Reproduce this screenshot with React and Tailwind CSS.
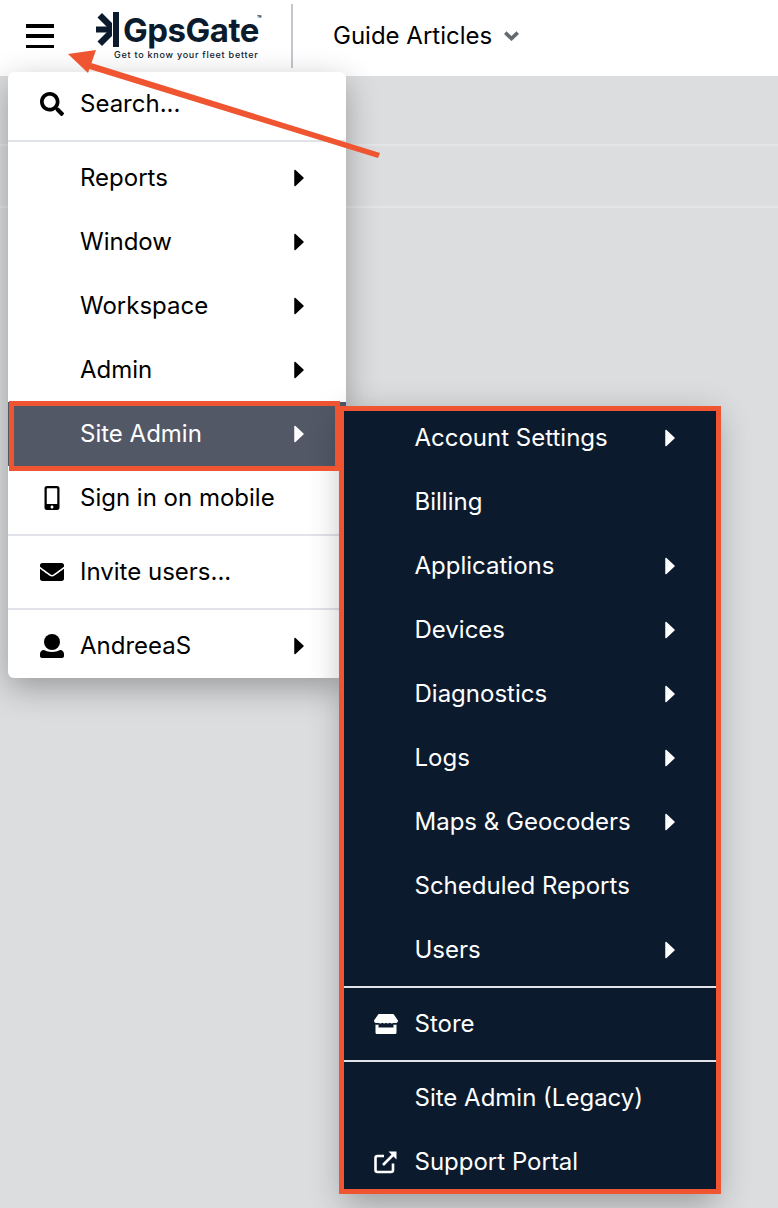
import { FaSearch, FaMobileAlt, FaEnvelope } from 'react-icons/fa';

const Caret = ({ className }) => (
  <svg width="10" height="18" viewBox="0 0 10 18" className={className} fill="currentColor" stroke="currentColor" strokeWidth="1.5" strokeLinejoin="round">
    <path d="M1 1.5 L9 9 L1 16.5 Z" />
  </svg>
);

const UserIcon = () => (
  <svg width="24" height="24" viewBox="0 0 24 24" fill="currentColor">
    <circle cx="12" cy="8" r="8" />
    <path d="M4 16 C6 17.2 9 18 12 18 C15 18 18 17.2 20 16 C22.5 16 24 18 24 20 V22 C24 23.2 23.2 24 22 24 H2 C0.8 24 0 23.2 0 22 V20 C0 18 1.5 16 4 16 Z" />
  </svg>
);

const StoreIcon = () => (
  <svg width="24" height="20" viewBox="0 0 24 20" fill="currentColor">
    <path d="M4.5 0 H19.5 L24 6.5 C24 9 21.5 9.6 20 8.7 C18.6 9.8 16.5 9.6 15.8 8.7 C14.5 9.8 13 9.8 12 8.7 C11 9.8 9.5 9.8 8.2 8.7 C7.5 9.6 5.4 9.8 4 8.7 C2.5 9.6 0 9 0 6.5 Z" />
    <path fillRule="evenodd" d="M1.5 10.5 C2.5 10.9 3.5 10.9 4.5 10.5 V13.5 H19.5 V10.5 C20.5 10.9 21.5 10.9 22.5 10.5 V18.5 C22.5 19.4 22 20 21 20 H3 C2 20 1.5 19.4 1.5 18.5 Z" />
  </svg>
);

const ExternalIcon = () => (
  <svg width="24" height="24" viewBox="0 0 24 24" fill="none" stroke="currentColor" strokeWidth="2.6">
    <path d="M19 13.5 V20 C19 21.2 18.2 22 17 22 H3.5 C2.3 22 1.5 21.2 1.5 20 V8 C1.5 6.8 2.3 6 3.5 6 H10" strokeLinejoin="round" />
    <path d="M9 15 L21 3" />
    <path d="M14.5 1.5 H22.5 V9.5 Z" fill="currentColor" stroke="none" />
  </svg>
);

const Row = ({ icon, label, caret, active }) => (
  <div className={`flex h-16 items-center pl-8 ${active ? 'bg-[#525866] text-white' : ''}`}>
    <div className="flex w-6 justify-center">{icon}</div>
    <span className="ml-4">{label}</span>
    {caret && <Caret className="ml-auto mr-[42px]" />}
  </div>
);

const SubRow = ({ icon, label, caret }) => (
  <div className="flex h-16 items-center pl-[30px]">
    <div className="flex w-6 justify-center">{icon}</div>
    <span className="ml-[16.5px]">{label}</span>
    {caret && <Caret className="ml-auto mr-[41px]" />}
  </div>
);

const Divider = ({ color }) => <div className={`my-1 h-0.5 ${color}`} />;

export default function App() {
  return (
    <div className="relative h-[1208px] w-[778px] overflow-hidden bg-[#dcdddf] font-['Inter',sans-serif] text-2xl text-black">
      {/* Header */}
      <div className="flex h-[76px] items-center bg-white pb-1">
        <div className="ml-[26px] flex w-7 flex-col gap-[6.75px]">
          <div className="h-[3.5px] bg-black" />
          <div className="h-[3.5px] bg-black" />
          <div className="h-[3.5px] bg-black" />
        </div>
        <div className="ml-[42px] w-[164px]">
          <div className="flex items-center">
            <svg width="23" height="35" viewBox="0 0 23 35" fill="#0b1b2d" className="shrink-0">
              <rect x="17" y="0" width="6" height="35" />
              <path d="M0 14.5 H16 V20.5 H0 Z" />
              <path d="M1.5 5.5 L6 1 L16 11 V17.5 H13.5 Z" />
              <path d="M1.5 29.5 L6 34 L16 24 V17.5 H13.5 Z" />
            </svg>
            <span className="ml-[4px] whitespace-nowrap text-[33px] leading-[32px] font-bold tracking-[-0.5px] text-[#0b1b2d]">
              GpsGate<span className="-ml-0.5 align-top text-[7px] leading-[10px] tracking-normal">™</span>
            </span>
          </div>
          <div className="ml-[18px] mt-[3px] whitespace-nowrap text-[9px] leading-[10px] font-medium tracking-[0.75px] text-[#0b1b2d]">
            Get to know your fleet better
          </div>
        </div>
        <div className="ml-[31px] h-16 w-0.5 bg-[#c3c6cc]" />
        <span className="ml-10">Guide Articles</span>
        <svg width="15" height="10" viewBox="0 0 15 10" className="ml-3 text-[#666a70]" fill="none" stroke="currentColor" strokeWidth="3.6">
          <path d="M1.3 1.6 L7.5 7.6 L13.7 1.6" />
        </svg>
      </div>

      {/* Page behind the menu */}
      <div className="h-[70px] border-b-2 border-[#e4e5e7]" />
      <div className="h-[62px] border-b-2 border-[#e4e5e7]" />

      {/* Main menu */}
      <div className="absolute left-2 top-[72px] w-[338px] overflow-hidden rounded-md bg-white shadow-[0_10px_32px_rgba(0,0,0,0.3)]">
        <Row icon={<FaSearch size={24} />} label="Search..." />
        <Divider color="bg-[#e0e4e8]" />
        <Row label="Reports" caret />
        <Row label="Window" caret />
        <Row label="Workspace" caret />
        <Row label="Admin" caret />
        <Row label="Site Admin" caret active />
        <Row icon={<FaMobileAlt size={24} />} label="Sign in on mobile" />
        <Divider color="bg-[#e1e2ea]" />
        <Row icon={<FaEnvelope size={24} />} label="Invite users..." />
        <Divider color="bg-[#e1e2ea]" />
        <Row icon={<UserIcon />} label="AndreeaS" caret />
      </div>

      {/* Site Admin submenu */}
      <div className="absolute left-[344px] top-[406px] w-[372px] bg-[#0b1b2d] text-white shadow-[0_10px_32px_rgba(0,0,0,0.3)]">
        <SubRow label="Account Settings" caret />
        <SubRow label="Billing" />
        <SubRow label="Applications" caret />
        <SubRow label="Devices" caret />
        <SubRow label="Diagnostics" caret />
        <SubRow label="Logs" caret />
        <SubRow label="Maps & Geocoders" caret />
        <SubRow label="Scheduled Reports" />
        <SubRow label="Users" caret />
        <Divider color="bg-[#e1e2ea]" />
        <SubRow icon={<StoreIcon />} label="Store" />
        <Divider color="bg-[#e1e2ea]" />
        <SubRow label="Site Admin (Legacy)" />
        <SubRow icon={<ExternalIcon />} label="Support Portal" />
      </div>

      {/* Annotations */}
      <div className="absolute left-[9px] top-[401px] h-[70px] w-[331px] border-[5px] border-[#ee5530]" />
      <div className="absolute left-[339px] top-[406px] h-[788px] w-[382px] border-[5px] border-[#ee5530]" />
      <svg className="absolute left-0 top-0" width="400" height="170" fill="#ee5530">
        <path d="M380 153 L88 62 L86 68 L378 158 Z" />
        <path d="M68 54 L96 50 L88 73 Z" />
      </svg>
    </div>
  );
}
